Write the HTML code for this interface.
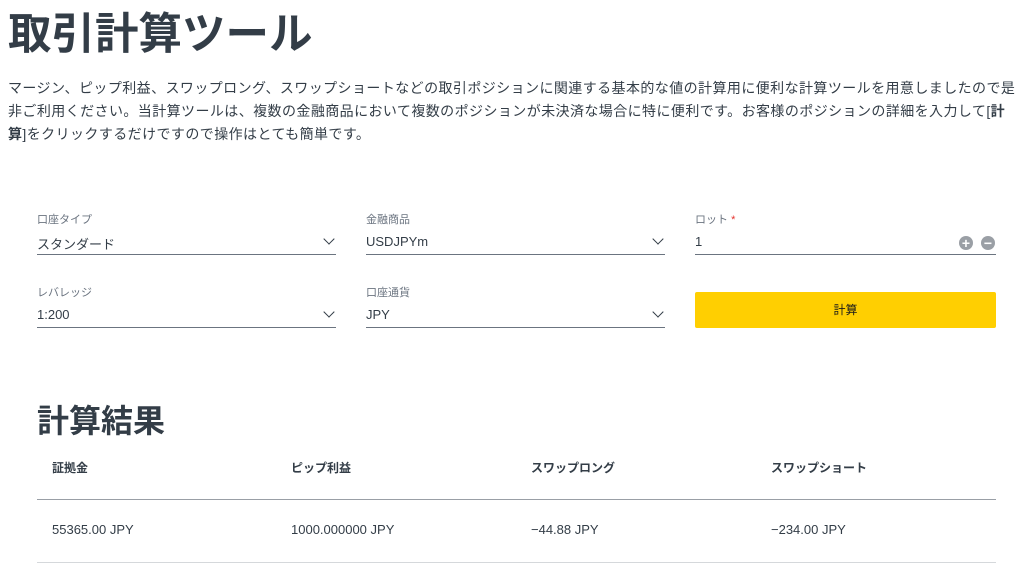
<!DOCTYPE html>
<html><head><meta charset="utf-8"><style>
body{margin:0;background:#fff;font-family:"Liberation Sans","Noto Sans CJK JP",sans-serif;color:#333d47;width:1024px;height:574px;overflow:hidden;position:relative}
.a{position:absolute}
h1{position:absolute;left:8px;top:-1px;margin:0;font-size:43.5px;font-weight:700;letter-spacing:0px}
p{position:absolute;left:8px;top:77px;width:1030px;margin:0;font-size:14px;line-height:23px;color:#333d47;letter-spacing:0.42px;white-space:nowrap}
.lab{font-size:11px;color:#6b7480}
.val{font-size:13px;color:#333d47}
.ul{height:1px;background:#6b7480}
.chev{width:7px;height:7px;border-right:1.6px solid #333d47;border-bottom:1.6px solid #333d47;transform:rotate(45deg)}
.circ{width:14px;height:14px;border-radius:50%;background:#9a9fa5;color:#fff;font-size:14px;font-weight:700;line-height:14px;text-align:center}
.btn{background:#ffcf01;border-radius:2px;font-size:12px;text-align:center;line-height:36px;color:#1a1a1a}
h2{position:absolute;left:37px;top:396px;margin:0;font-size:32px;font-weight:700}
.th{font-size:12px;font-weight:700}
.td{font-size:13px}
.hr{height:1px;background:#999fa6;left:37px;width:959px}
</style></head><body>
<h1>取引計算ツール</h1>
<p>マージン、ピップ利益、スワップロング、スワップショートなどの取引ポジションに関連する基本的な値の計算用に便利な計算ツールを用意しましたので是<br>非ご利用ください。当計算ツールは、複数の金融商品において複数のポジションが未決済な場合に特に便利です。お客様のポジションの詳細を入力して[<b>計</b><br><b>算</b>]をクリックするだけですので操作はとても簡単です。</p>

<div class="a lab" style="left:37px;top:211px">口座タイプ</div>
<div class="a val" style="left:37px;top:234px">スタンダード</div>
<div class="a chev" style="left:325px;top:235px"></div>
<div class="a ul" style="left:37px;top:254px;width:299px"></div>

<div class="a lab" style="left:366px;top:211px">金融商品</div>
<div class="a val" style="left:366px;top:234px">USDJPYm</div>
<div class="a chev" style="left:654px;top:235px"></div>
<div class="a ul" style="left:366px;top:254px;width:299px"></div>

<div class="a lab" style="left:695px;top:211px">ロット <span style="color:#e5322d">*</span></div>
<div class="a val" style="left:695px;top:234px">1</div>
<div class="a circ" style="left:959px;top:236px">+</div>
<div class="a circ" style="left:981px;top:236px">−</div>
<div class="a ul" style="left:695px;top:254px;width:301px"></div>

<div class="a lab" style="left:37px;top:284px">レバレッジ</div>
<div class="a val" style="left:37px;top:307px">1:200</div>
<div class="a chev" style="left:325px;top:308px"></div>
<div class="a ul" style="left:37px;top:327px;width:299px"></div>

<div class="a lab" style="left:366px;top:284px">口座通貨</div>
<div class="a val" style="left:366px;top:307px">JPY</div>
<div class="a chev" style="left:654px;top:308px"></div>
<div class="a ul" style="left:366px;top:327px;width:299px"></div>

<div class="a btn" style="left:695px;top:292px;width:301px;height:36px">計算</div>

<h2>計算結果</h2>
<div class="a th" style="left:52px;top:459px">証拠金</div>
<div class="a th" style="left:291px;top:459px">ピップ利益</div>
<div class="a th" style="left:531px;top:459px">スワップロング</div>
<div class="a th" style="left:771px;top:459px">スワップショート</div>
<div class="a hr" style="top:499px"></div>
<div class="a td" style="left:52px;top:522px">55365.00 JPY</div>
<div class="a td" style="left:291px;top:522px">1000.000000 JPY</div>
<div class="a td" style="left:531px;top:522px">−44.88 JPY</div>
<div class="a td" style="left:771px;top:522px">−234.00 JPY</div>
<div class="a hr" style="top:562px;background:#d5d8db"></div>
</body></html>
